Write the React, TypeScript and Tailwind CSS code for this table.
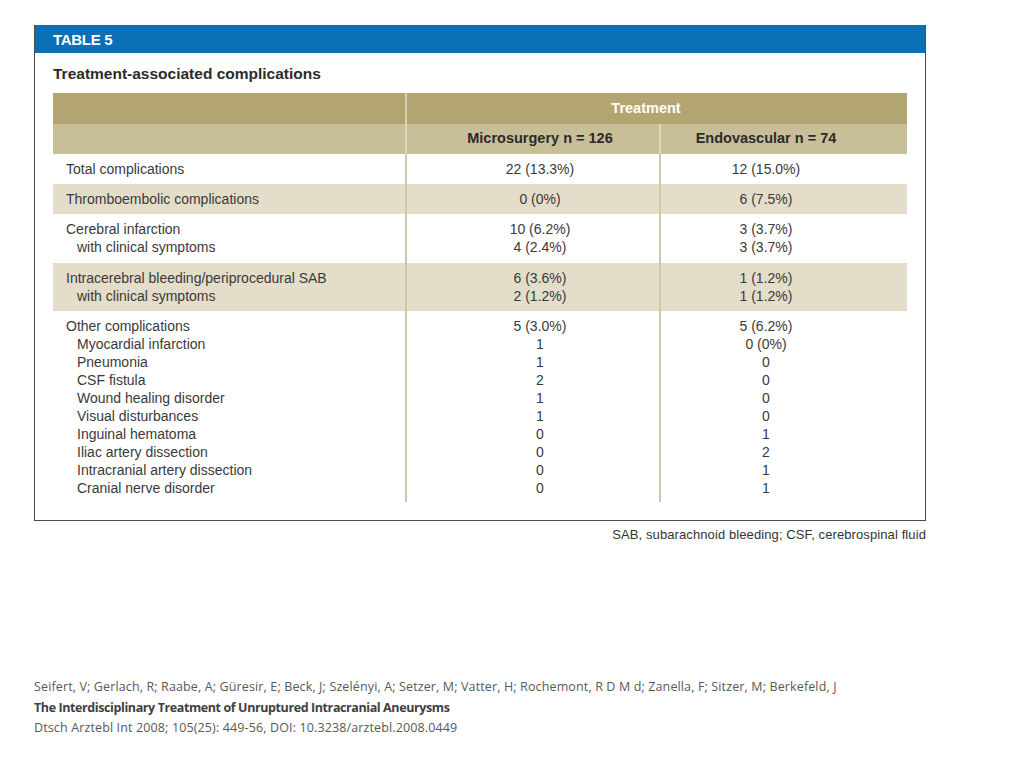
import React from 'react';

type Row = {
  labels: string[];
  micro: string[];
  endo: string[];
  shaded?: boolean;
  h: string;
};

const rows: Row[] = [
  { labels: ['Total complications'], micro: ['22 (13.3%)'], endo: ['12 (15.0%)'], h: 'h-[30px]' },
  { labels: ['Thromboembolic complications'], micro: ['0 (0%)'], endo: ['6 (7.5%)'], shaded: true, h: 'h-[30px]' },
  {
    labels: ['Cerebral infarction', 'with clinical symptoms'],
    micro: ['10 (6.2%)', '4 (2.4%)'],
    endo: ['3 (3.7%)', '3 (3.7%)'],
    h: 'h-[49px]',
  },
  {
    labels: ['Intracerebral bleeding/periprocedural SAB', 'with clinical symptoms'],
    micro: ['6 (3.6%)', '2 (1.2%)'],
    endo: ['1 (1.2%)', '1 (1.2%)'],
    shaded: true,
    h: 'h-[48px]',
  },
  {
    labels: [
      'Other complications',
      'Myocardial infarction',
      'Pneumonia',
      'CSF fistula',
      'Wound healing disorder',
      'Visual disturbances',
      'Inguinal hematoma',
      'Iliac artery dissection',
      'Intracranial artery dissection',
      'Cranial nerve disorder',
    ],
    micro: ['5 (3.0%)', '1', '1', '2', '1', '1', '0', '0', '0', '0'],
    endo: ['5 (6.2%)', '0 (0%)', '0', '0', '0', '0', '1', '2', '1', '1'],
    h: 'h-[191px]',
  },
];

// first line of each label group sits flush, the rest are indented
const Lines = ({ items, indent }: { items: string[]; indent?: boolean }) => (
  <div className="flex flex-col">
    {items.map((t, i) => (
      <span key={i} className={`leading-[18px] whitespace-pre ${indent && i > 0 ? 'pl-[11px]' : ''}`}>{t}</span>
    ))}
  </div>
);

export default function App() {
  return (
    <div className="w-[1024px] h-[768px] bg-white relative font-['Liberation_Sans',Arial,sans-serif]">
      <div className="pt-[25px] pl-[34px]">
        {/* Table frame */}
        <div className="w-[892px] h-[496px] border-l-[1.5px] border-r border-b-[1.5px] border-[#4a4a4a] flex flex-col">
          <div className="h-[28px] bg-[#0a6fb4] flex items-center pl-[18px]">
            <span className="text-white font-bold text-[15px] tracking-[-0.3px] leading-none">TABLE 5</span>
          </div>
          <div className="h-[40px] flex items-center pl-[18px] pt-[2px]">
            <span className="text-[#2b2b2b] font-bold text-[15.5px]">Treatment-associated complications</span>
          </div>

          <div className="ml-[18px] w-[854px] text-[14px] text-[#3a3a3a]">
            {/* Header rows */}
            <div className="grid grid-cols-[354px_254px_246px] h-[31px] bg-[#b3a571]">
              <div className="border-r-2 border-[#d8d0b0]" />
              <div className="col-span-2 flex items-center justify-center pl-[14px] pr-[36px] text-white font-bold text-[14.5px]">
                Treatment
              </div>
            </div>
            <div className="grid grid-cols-[354px_254px_246px] h-[30px] bg-[#c8be97] text-[#2b2b2b] font-bold text-[14.5px]">
              <div className="border-r-2 border-[#ddd6ba]" />
              <div className="border-r-2 border-[#ddd6ba] flex items-center justify-center pl-[14px]">Microsurgery n = 126</div>
              <div className="flex items-center justify-center pr-[36px]">Endovascular n = 74</div>
            </div>

            {rows.map((r, i) => (
              <div
                key={i}
                className={`grid grid-cols-[354px_254px_246px] ${r.h} ${r.shaded ? 'bg-[#e3ddc9]' : 'bg-white'}`}
              >
                <div className="border-r-2 border-[#cfc7a8] flex pl-[13px] pt-[6px]">
                  <Lines items={r.labels} indent />
                </div>
                <div className="border-r-2 border-[#cfc7a8] flex justify-center pl-[14px] pt-[6px] text-center">
                  <Lines items={r.micro} />
                </div>
                <div className="flex justify-center pr-[36px] pt-[6px] text-center">
                  <Lines items={r.endo} />
                </div>
              </div>
            ))}
          </div>
        </div>

        <div className="w-[892px] flex justify-end pt-[4px]">
          <span className="text-[13px] text-[#333] tracking-[0.1px]">SAB, subarachnoid bleeding; CSF, cerebrospinal fluid</span>
        </div>
      </div>

      {/* Citation */}
      <div className="absolute left-[34px] top-[677px] text-[12.5px] leading-[20.5px] text-[#595959] font-['Open_Sans',sans-serif] tracking-[0.13px]">
        <p>Seifert, V; Gerlach, R; Raabe, A; Güresir, E; Beck, J; Szelényi, A; Setzer, M; Vatter, H; Rochemont, R D M d; Zanella, F; Sitzer, M; Berkefeld, J</p>
        <p className="font-bold text-[#404040] tracking-[-0.4px]">The Interdisciplinary Treatment of Unruptured Intracranial Aneurysms</p>
        <p>Dtsch Arztebl Int 2008; 105(25): 449-56, DOI: 10.3238/arztebl.2008.0449</p>
      </div>
    </div>
  );
}
